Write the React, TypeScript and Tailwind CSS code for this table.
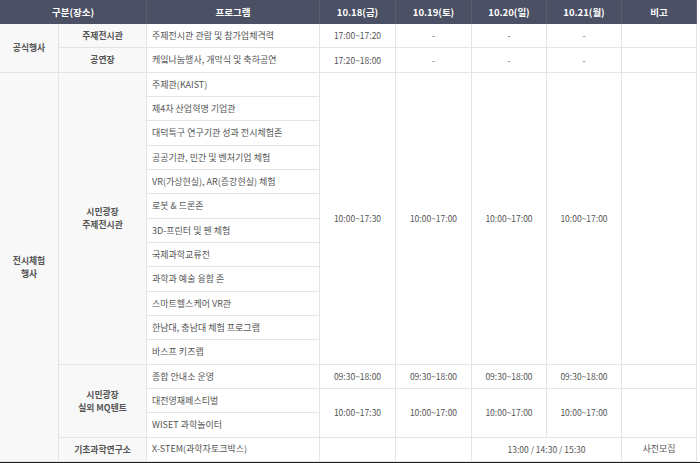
import React from "react";

const font = { fontFamily: '"Noto Sans CJK KR", "Noto Sans", sans-serif' };

function Head({ children, wide }: { children?: React.ReactNode; wide?: boolean }) {
  return (
    <div
      className={`${wide ? "col-span-2" : ""} flex items-center justify-center border-r border-[#5a5f72] bg-[#4b5064] text-[9.5px] font-bold text-white`}
    >
      {children}
    </div>
  );
}

function Cell({
  children,
  className = "",
}: {
  children?: React.ReactNode;
  className?: string;
}) {
  return (
    <div
      className={`flex items-center justify-center border-r border-b border-[#e4e4e4] text-center text-[8.5px] text-[#555] ${className}`}
    >
      {children}
    </div>
  );
}

function Label({ children, className = "" }: { children: React.ReactNode; className?: string }) {
  return (
    <Cell className={`bg-[#f8f8f8] text-[8.8px] font-bold leading-[13px] text-[#333] ${className}`}>
      {children}
    </Cell>
  );
}

function Prog({ children }: { children: React.ReactNode }) {
  return (
    <div className="flex items-center border-r border-b border-[#e4e4e4] pl-[5px] text-[9px] text-[#555]">
      {children}
    </div>
  );
}

const programs = [
  "주제관(KAIST)",
  "제4차 산업혁명 기업관",
  "대덕특구 연구기관 성과 전시체험존",
  "공공기관, 민간 및 벤처기업 체험",
  "VR(가상현실), AR(증강현실) 체험",
  "로봇 & 드론존",
  "3D-프린터 및 펜 체험",
  "국제과학교류전",
  "과학과 예술 융합 존",
  "스마트헬스케어 VR관",
  "한남대, 충남대 체험 프로그램",
  "바스프 키즈랩",
];

export default function App() {
  return (
    <div className="h-[463px] w-[700px] overflow-hidden bg-white" style={font}>
      <div className="grid w-[697px] grid-cols-[59px_88px_173px_76px_76px_75px_75px_75px] grid-rows-[24px_repeat(18,24.33px)]">
        <Head wide>구분(장소)</Head>
        <Head>프로그램</Head>
        <Head>10.18(금)</Head>
        <Head>10.19(토)</Head>
        <Head>10.20(일)</Head>
        <Head>10.21(월)</Head>
        <Head>비고</Head>

        <Label className="row-span-2">공식행사</Label>
        <Label>주제전시관</Label>
        <Prog>주제전시관 관람 및 참가업체격력</Prog>
        <Cell>17:00~17:20</Cell>
        <Cell>-</Cell>
        <Cell>-</Cell>
        <Cell>-</Cell>
        <Cell />

        <Label>공연장</Label>
        <Prog>케잌나눔행사, 개막식 및 축하공연</Prog>
        <Cell>17:20~18:00</Cell>
        <Cell>-</Cell>
        <Cell>-</Cell>
        <Cell>-</Cell>
        <Cell />

        <Label className="row-span-16">
          전시체험
          <br />
          행사
        </Label>
        <Label className="row-span-12">
          시민광장
          <br />
          주제전시관
        </Label>
        <Prog>{programs[0]}</Prog>
        <Cell className="row-span-12">10:00~17:30</Cell>
        <Cell className="row-span-12">10:00~17:00</Cell>
        <Cell className="row-span-12">10:00~17:00</Cell>
        <Cell className="row-span-12">10:00~17:00</Cell>
        <Cell className="row-span-12" />
        {programs.slice(1).map((p) => (
          <Prog key={p}>{p}</Prog>
        ))}

        <Label className="row-span-3">
          시민광장
          <br />
          실외 MQ텐트
        </Label>
        <Prog>종합 안내소 운영</Prog>
        <Cell>09:30~18:00</Cell>
        <Cell>09:30~18:00</Cell>
        <Cell>09:30~18:00</Cell>
        <Cell>09:30~18:00</Cell>
        <Cell />

        <Prog>대전영재페스티벌</Prog>
        <Cell className="row-span-2">10:00~17:30</Cell>
        <Cell className="row-span-2">10:00~17:00</Cell>
        <Cell className="row-span-2">10:00~17:00</Cell>
        <Cell className="row-span-2">10:00~17:00</Cell>
        <Cell className="row-span-2" />
        <Prog>WISET 과학놀이터</Prog>

        <Label>기초과학연구소</Label>
        <Prog>X-STEM(과학자토크박스)</Prog>
        <Cell />
        <Cell />
        <Cell className="col-span-2">13:00 / 14:30 / 15:30</Cell>
        <Cell className="text-[9px]">사전모집</Cell>
      </div>
      <div className="h-[3px] bg-[#1c1c1c]" />
    </div>
  );
}
